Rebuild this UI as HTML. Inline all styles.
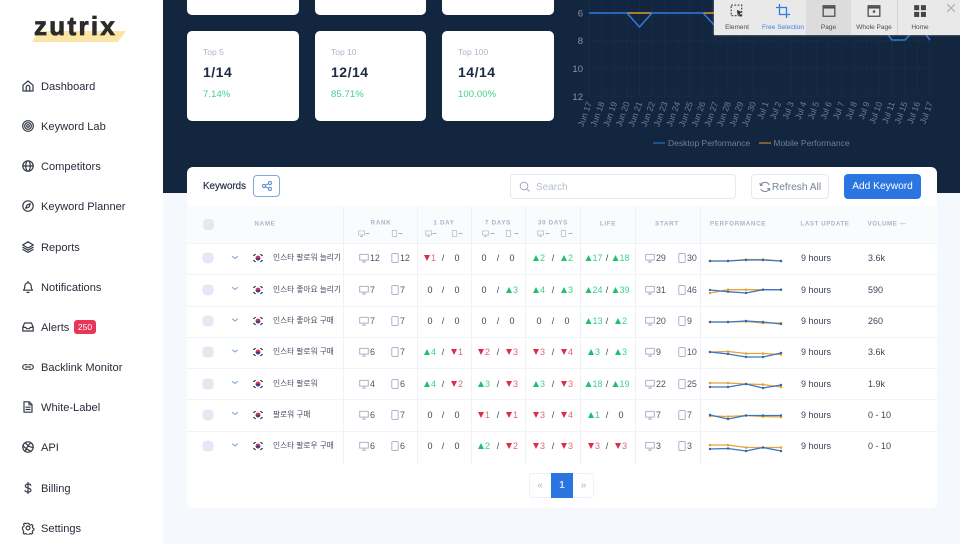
<!DOCTYPE html>
<html><head><meta charset="utf-8"><style>
*{box-sizing:border-box;margin:0;padding:0}
html,body{width:960px;height:544px;overflow:hidden;background:#f5f8fc;font-family:"Liberation Sans","Noto Sans CJK KR",sans-serif;position:relative}
.abs,.n,.n svg,.c,.r span,.r svg,.r i{position:absolute}
#side{position:absolute;left:0;top:0;width:163px;height:544px;background:#fff}
.n{left:41px;margin-top:1px;font-size:11.1px;line-height:14px;color:#262d3a;transform:translateY(-50%);white-space:nowrap}
.n svg{left:-20px;top:-1px;width:14px;height:14px;fill:none;stroke:#333a46;stroke-width:1.2;stroke-linecap:round;stroke-linejoin:round}
#hero{position:absolute;left:163px;top:0;width:797px;height:193px;background:#13263f}
.c{background:#fff;border-radius:5px;width:112px;height:90px;top:31px}
.c u{position:absolute;left:16px;text-decoration:none}
.c .a{top:16px;font-size:8.5px;color:#aab6ca}
.c .b{top:33px;font-size:14px;font-weight:bold;color:#1d2a42;letter-spacing:.5px}
.c .d{top:58px;font-size:9.5px;color:#3ed28c;letter-spacing:.1px}
#card{position:absolute;left:187px;top:167px;width:750px;height:341px;background:#fff;border-radius:6px}
#head{position:absolute;left:187px;top:206px;width:750px;height:37px;background:#f9fbfd}
.h{position:absolute;font-size:6.2px;font-weight:bold;letter-spacing:.7px;color:#a9b5c8;transform:translate(-50%,-50%);white-space:nowrap}
.ln{position:absolute;left:187px;width:750px;height:1px;background:#f0f3f8}
.vl{position:absolute;top:206px;height:258px;width:1px;background:#eef1f7}
.r{position:absolute;left:0;top:0;height:0;width:960px;font-size:9px;color:#3a4558}
.r span{transform:translate(-50%,-50%);white-space:nowrap;line-height:12px}
.r .k{left:208px;top:0;width:11px;height:11px;border-radius:4px;background:#e2e9f3;transform:translate(-50%,-50%)}
.r .t{left:273px;font-size:7.7px;transform:translateY(-50%);color:#434e60}
.r .l{transform:translateY(-50%)}
.g{color:#3fd08c;font-size:9px}.e{color:#e2677c;font-size:9px}
.g:before,.e:before{content:"";display:inline-block;width:0;height:0;border-left:3.5px solid transparent;border-right:3.5px solid transparent;margin-right:1px;vertical-align:0}
.g:before{border-bottom:6px solid #1fbf74}
.e:before{border-top:6px solid #dd2d4a}
.r .s{color:#4c566a;font-size:8.9px}
.ic{fill:none;stroke:#aab6ca;stroke-width:.9;stroke-linejoin:round;stroke-linecap:round}
.btn{position:absolute;top:174px;height:25px;border-radius:4px;font-size:10.2px;line-height:25px;text-align:center}
.tb{position:absolute;top:0;height:35px;font-size:6.5px;color:#4d4d4d;text-align:center;padding-top:23.5px;white-space:nowrap}
.tb svg{position:absolute;top:4px;left:50%;margin-left:-7px;width:14px;height:14px;fill:none;stroke:#4d4d4d;stroke-width:1.1}
</style></head><body>
<svg width="0" height="0" style="position:absolute"><defs>
<symbol id="mon" viewBox="0 0 9 9"><path d="M.6 1.2h7.8v5.2H.6zM3 8.2h3M4.5 6.4v1.8"/></symbol>
<symbol id="ph" viewBox="0 0 9 9"><rect x="1.6" y=".5" width="5.8" height="8" rx="1"/></symbol>
<symbol id="fl" viewBox="0 0 10 10"><circle cx="5" cy="5" r="2.4" fill="#d4314b"/><path d="M2.6 5a2.4 2.4 0 0 0 4.8 0z" fill="#2b4a8e"/><path d="M.8 2.6l1.4-1.2M.8 7.4l1.4 1.2M9.2 2.6L7.8 1.4M9.2 7.4L7.8 8.6" stroke="#222" stroke-width="1.1" fill="none"/></symbol>
<marker id="mb" markerWidth="3" markerHeight="3" refX="1.5" refY="1.5" markerUnits="userSpaceOnUse"><circle cx="1.5" cy="1.5" r="1.2" fill="#33659f"/></marker>
<marker id="mo" markerWidth="3" markerHeight="3" refX="1.5" refY="1.5" markerUnits="userSpaceOnUse"><circle cx="1.5" cy="1.5" r="1.3" fill="#e8a23a"/></marker>
</defs></svg>

<div id="side">
<svg class="abs" style="left:30px;top:29px" width="98" height="14"><path d="M9 2H96L88 13H2z" fill="#fbe5a6"/></svg>
<div class="abs" style="left:34px;top:11px;font-size:26px;line-height:30px;font-weight:bold;color:#2c2b29;letter-spacing:2.3px;-webkit-text-stroke:.8px #2c2b29">zutrix</div>

<div class="n" style="top:86px"><svg viewBox="0 0 14 14"><path d="M2 6.2 7 2l5 4.2V12H2zM5.2 12V8.2a1.800 1.800 0 0 1 3.600 0V12"/></svg>Dashboard</div>
<div class="n" style="top:126px"><svg viewBox="0 0 14 14"><circle cx="7" cy="7" r="5.300"/><circle cx="7" cy="7" r="3.300"/><circle cx="7" cy="7" r="1.300"/></svg>Keyword Lab</div>
<div class="n" style="top:166px"><svg viewBox="0 0 14 14"><circle cx="7" cy="7" r="5.200"/><ellipse cx="7" cy="7" rx="2.300" ry="5.200"/><path d="M1.800 7h10.400"/></svg>Competitors</div>
<div class="n" style="top:206px"><svg viewBox="0 0 14 14"><circle cx="7" cy="7" r="5.200"/><path d="M9.300 4.700 8 8 4.700 9.300 6 6z"/></svg>Keyword Planner</div>
<div class="n" style="top:247px"><svg viewBox="0 0 14 14"><path d="M7 1.800 12.300 5 7 8 1.700 5zM1.900 7.300 7 10.200l5.100-2.900M1.900 9.600 7 12.400l5.100-2.800"/></svg>Reports</div>
<div class="n" style="top:287px"><svg viewBox="0 0 14 14"><path d="M2.500 10.200c1-1 1.300-1.800 1.300-4.200a3.200 3.200 0 0 1 6.400 0c0 2.400.3 3.200 1.300 4.200zM6 12.400h2M7 1.500v1.200"/></svg>Notifications</div>
<div class="n" style="top:327px"><svg viewBox="0 0 14 14"><path d="M1.800 7 3.600 3h6.800l1.800 4v4H1.800zM1.800 7.400h3l.8 1.300h2.800l.8-1.300h3"/></svg>Alerts</div>
<div class="abs" style="left:74px;top:320px;width:22px;height:14px;background:#e8365a;border-radius:3px;color:#fff;font-size:8.5px;line-height:14px;text-align:center">250</div>
<div class="n" style="top:367px"><svg viewBox="0 0 14 14"><path d="M6 4.700H4a2.300 2.300 0 0 0 0 4.600h2M8 4.700h2a2.300 2.300 0 0 1 0 4.600H8M4.800 7h4.400"/></svg>Backlink Monitor</div>
<div class="n" style="top:407px"><svg viewBox="0 0 14 14"><path d="M3 1.800h5.300L11 4.500v7.700H3zM8 2v2.800h3M5 7.200h4M5 9.500h4"/></svg>White-Label</div>
<div class="n" style="top:447px"><svg viewBox="0 0 14 14"><circle cx="7" cy="7" r="5.200"/><path d="M4.200 2.600C6 5 9 7 11.900 7.600M9.800 2.600C8 5 5 8 4.200 11.400M2 5.600c2 2.600 5.600 4.500 7.800 5.800"/></svg>API</div>
<div class="n" style="top:488px"><svg viewBox="0 0 14 14"><path d="M7 1.500v11M9.800 4.200C9.300 3.300 8.300 3 7 3 5.400 3 4.300 3.800 4.300 5S5.400 6.600 7 7s2.900 1 2.900 2.200S8.700 11 7 11c-1.400 0-2.500-.4-3-1.300"/></svg>Billing</div>
<div class="n" style="top:528px"><svg viewBox="0 0 14 14"><circle cx="7" cy="7" r="1.900"/><path d="M6 1.700h2l.4 1.500 1.400.6 1.300-.8 1.400 1.400-.8 1.300.6 1.400 1.300.4v1.900l-1.400.4-.6 1.400.8 1.300-1.400 1.300-1.300-.7-1.400.6-.4 1.400H6l-.4-1.500-1.400-.6-1.300.8-1.400-1.400.8-1.300-.6-1.400L.8 8V6l1.400-.4.600-1.400L2 2.900l1.400-1.400 1.300.8 1.400-.6z" transform="translate(.7 .7) scale(.9)"/></svg>Settings</div>
</div>

<div id="hero"></div>
<div class="c" style="left:187px;top:-75px"></div>
<div class="c" style="left:315px;top:-75px;width:111px"></div>
<div class="c" style="left:442px;top:-75px"></div>
<div class="c" style="left:187px"><u class="a">Top 5</u><u class="b">1/14</u><u class="d">7.14%</u></div>
<div class="c" style="left:315px;width:111px"><u class="a">Top 10</u><u class="b">12/14</u><u class="d">85.71%</u></div>
<div class="c" style="left:442px"><u class="a">Top 100</u><u class="b">14/14</u><u class="d">100.00%</u></div>

<svg class="abs" style="left:560px;top:0" width="400" height="165" font-family="Liberation Sans" >
<g stroke="#22364f" stroke-width="1" stroke-dasharray="1 2">
<path d="M29 13H370M29 41H370M29 68H370M29 96H370"/></g>
<g stroke="#182b45" stroke-width="1">
<path d="M29 0V96M41.600 0V96M54.300 0V96M66.900 0V96M79.500 0V96M92.100 0V96M104.800 0V96M117.400 0V96M130 0V96M142.600 0V96M155.300 0V96M167.900 0V96M180.500 0V96M193.100 0V96M205.800 0V96M218.400 0V96M231 0V96M243.600 0V96M256.300 0V96M268.900 0V96M281.500 0V96M294.100 0V96M306.800 0V96M319.400 0V96M332 0V96M344.600 0V96M357.300 0V96M370 0V96"/></g>
<g fill="#8494aa" font-size="9.500" text-anchor="end"><text x="23" y="16.500">6</text><text x="23" y="44">8</text><text x="23" y="72">10</text><text x="23" y="100">12</text></g>
<path d="M67 13H92M143 13H170" stroke="#e0982e" stroke-width="1.500" fill="none"/>
<path d="M29 13H67L79.500 27 92 13H143L156 27 170 27M322 27 332 40H345L357 27M360 27 370 40" stroke="#2c7be0" stroke-width="1.500" fill="none"/>
<g fill="#6d7f98" font-size="8.600" text-anchor="end">
<text transform="translate(32 103) rotate(-70)">Jun 17</text><text transform="translate(44.600 103) rotate(-70)">Jun 18</text><text transform="translate(57.300 103) rotate(-70)">Jun 19</text><text transform="translate(69.900 103) rotate(-70)">Jun 20</text><text transform="translate(82.500 103) rotate(-70)">Jun 21</text><text transform="translate(95.100 103) rotate(-70)">Jun 22</text><text transform="translate(107.800 103) rotate(-70)">Jun 23</text><text transform="translate(120.400 103) rotate(-70)">Jun 24</text><text transform="translate(133 103) rotate(-70)">Jun 25</text><text transform="translate(145.600 103) rotate(-70)">Jun 26</text><text transform="translate(158.300 103) rotate(-70)">Jun 27</text><text transform="translate(170.900 103) rotate(-70)">Jun 28</text><text transform="translate(183.500 103) rotate(-70)">Jun 29</text><text transform="translate(196.100 103) rotate(-70)">Jun 30</text><text transform="translate(208.800 103) rotate(-70)">Jul 1</text><text transform="translate(221.400 103) rotate(-70)">Jul 2</text><text transform="translate(234 103) rotate(-70)">Jul 3</text><text transform="translate(246.600 103) rotate(-70)">Jul 4</text><text transform="translate(259.300 103) rotate(-70)">Jul 5</text><text transform="translate(271.900 103) rotate(-70)">Jul 6</text><text transform="translate(284.500 103) rotate(-70)">Jul 7</text><text transform="translate(297.100 103) rotate(-70)">Jul 8</text><text transform="translate(309.800 103) rotate(-70)">Jul 9</text><text transform="translate(322.400 103) rotate(-70)">Jul 10</text><text transform="translate(335 103) rotate(-70)">Jul 11</text><text transform="translate(347.600 103) rotate(-70)">Jul 15</text><text transform="translate(360.300 103) rotate(-70)">Jul 16</text><text transform="translate(373 103) rotate(-70)">Jul 17</text>
</g>
<path d="M93 143h12" stroke="#2c7be0" stroke-width="1"/><path d="M199 143h12" stroke="#e0982e" stroke-width="1"/>
<g fill="#6d7f98" font-size="8.500"><text x="108" y="146">Desktop Performance</text><text x="213.500" y="146">Mobile Performance</text></g>
</svg>

<div class="abs" style="left:714px;top:0;width:246px;height:35px;background:#e9e9e9;box-shadow:0 0 2px #999"></div>
<div class="abs" style="left:806px;top:0;width:45px;height:35px;background:#dcdcdc"></div>
<div class="abs" style="left:897px;top:0;width:1px;height:35px;background:#d2d2d2"></div>
<div class="tb" style="left:714px;width:46px"><svg viewBox="0 0 12 12"><path d="M1 1h9v9H1z" stroke-dasharray="1.500 1.300"/><path d="M6 5l4.500 2-2 .7L10 10.500 9 11 7.600 8.600 6.500 10z" fill="#333" stroke="none"/></svg>Element</div>
<div class="tb" style="left:760px;width:46px;color:#3f84e8"><svg viewBox="0 0 12 12" style="stroke:#2f7be6"><path d="M3 0v9h9M0 3h9v9"/></svg>Free Selection</div>
<div class="tb" style="left:806px;width:45px"><svg viewBox="0 0 12 12"><path d="M1 1.500h10v9H1z"/><path d="M1 3h10" stroke-width="1.800"/></svg>Page</div>
<div class="tb" style="left:851px;width:46px"><svg viewBox="0 0 12 12"><path d="M1 1.500h10v9H1z"/><path d="M1 3h10" stroke-width="1.800"/><rect x="5" y="5.500" width="2" height="2" fill="#4d4d4d" stroke="none"/></svg>Whole Page</div>
<div class="tb" style="left:897px;width:46px"><svg viewBox="0 0 12 12" style="stroke:none;fill:#444"><rect x="1" y="1" width="4.300" height="4.300"/><rect x="6.800" y="1" width="4.300" height="4.300"/><rect x="1" y="6.800" width="4.300" height="4.300"/><rect x="6.800" y="6.800" width="4.300" height="4.300"/></svg>Home</div>
<svg class="abs" style="left:946px;top:3px" width="10" height="10"><path d="M1 1l8 8M9 1l-8 8" stroke="#aaa" stroke-width="1"/></svg>

<div id="card"></div>
<div class="abs" style="left:203px;top:181px;font-size:9.8px;line-height:12px;color:#25324a;-webkit-text-stroke:.2px #25324a">Keywords</div>
<div class="abs" style="left:253px;top:175px;width:27px;height:22px;border:1px solid #7fa8da;border-radius:4px"><svg class="abs" style="left:7px;top:4px" width="12" height="12" fill="none" stroke="#4f86cc" stroke-width=".9"><circle cx="3" cy="6" r="1.500"/><circle cx="9" cy="3" r="1.500"/><circle cx="9" cy="9" r="1.500"/><path d="M4.400 5.300 7.600 3.700M4.400 6.700l3.200 1.600"/></svg></div>
<div class="btn" style="left:510px;width:226px;border:1px solid #e4e9f1;text-align:left;padding-left:25px;color:#b4bfd0;font-size:10px">Search<svg class="abs" style="left:8px;top:6px" width="12" height="12" fill="none" stroke="#9aa7ba" stroke-width="1"><circle cx="5" cy="5" r="3.800"/><path d="M8 8l2.500 2.500"/></svg></div>
<div class="btn" style="left:751px;width:78px;border:1px solid #e4e9f1;color:#76849a;padding-left:13px">Refresh All<svg class="abs" style="left:7px;top:6px" width="12" height="12" fill="none" stroke="#76849a" stroke-width="1"><path d="M1.500 4.500A4.800 4.800 0 0 1 10.300 4M10.500 7.500A4.800 4.800 0 0 1 1.800 8M.8 2l.7 2.500L4 4M11 10l-.5-2.500L8 8"/></svg></div>
<div class="btn" style="left:844px;width:77px;background:#2a75e0;color:#fff">Add Keyword</div>

<div id="head"></div>
<div class="ln" style="top:243px"></div><div class="ln" style="top:274px"></div><div class="ln" style="top:306px"></div><div class="ln" style="top:337px"></div><div class="ln" style="top:368px"></div><div class="ln" style="top:399px"></div><div class="ln" style="top:431px"></div>
<div class="vl" style="left:343px"></div><div class="vl" style="left:417px"></div><div class="vl" style="left:471px"></div><div class="vl" style="left:525px"></div><div class="vl" style="left:580px"></div><div class="vl" style="left:635px"></div><div class="vl" style="left:700px"></div>

<div class="abs" style="left:203px;top:219px;width:11px;height:11px;border-radius:4px;background:#e2e9f3"></div>
<div class="h" style="left:265px;top:224px">NAME</div>
<div class="h" style="left:381px;top:223px">RANK</div>
<div class="h" style="left:444px;top:223px">1 DAY</div>
<div class="h" style="left:498px;top:223px">7 DAYS</div>
<div class="h" style="left:553px;top:223px">30 DAYS</div>
<div class="h" style="left:608px;top:224px">LIFE</div>
<div class="h" style="left:667px;top:224px">START</div>
<div class="h" style="left:738px;top:224px">PERFORMANCE</div>
<div class="h" style="left:825px;top:224px;letter-spacing:.55px">LAST UPDATE</div>
<div class="h" style="left:887px;top:224px;letter-spacing:.55px">VOLUME —</div>

<svg class="abs ic" style="left:0;top:0" width="960" height="544">
<use href="#mon" x="358" y="230" width="7" height="7"/><use href="#ph" x="391" y="230" width="7" height="7"/>
<use href="#mon" x="425" y="230" width="7" height="7"/><use href="#ph" x="451" y="230" width="7" height="7"/>
<use href="#mon" x="482" y="230" width="7" height="7"/><use href="#ph" x="505" y="230" width="7" height="7"/>
<use href="#mon" x="537" y="230" width="7" height="7"/><use href="#ph" x="560" y="230" width="7" height="7"/>
<path d="M366 233.500h3M399 233.500h3M433 233.500h3M459 233.500h3M491 233.500h3M515 233.500h3M546 233.500h3M569 233.500h3" stroke="#a3afc2"/>
<path d="M232.500 256.500l2.500 2 2.500-2M232.500 287.500l2.500 2 2.500-2M232.500 319l2.500 2 2.500-2M232.500 350l2.500 2 2.500-2M232.500 381.500l2.500 2 2.500-2M232.500 412.500l2.500 2 2.500-2M232.500 444l2.500 2 2.500-2" stroke="#6f9fd8" stroke-width="1"/>
<g stroke="#a9b5c9" stroke-width=".9">
<use href="#mon" x="359" y="253" width="10" height="10"/><use href="#ph" x="390" y="253" width="10" height="10"/><use href="#mon" x="645" y="253" width="10" height="10"/><use href="#ph" x="677" y="253" width="10" height="10"/>
<use href="#mon" x="359" y="285" width="10" height="10"/><use href="#ph" x="390" y="285" width="10" height="10"/><use href="#mon" x="645" y="285" width="10" height="10"/><use href="#ph" x="677" y="285" width="10" height="10"/>
<use href="#mon" x="359" y="316" width="10" height="10"/><use href="#ph" x="390" y="316" width="10" height="10"/><use href="#mon" x="645" y="316" width="10" height="10"/><use href="#ph" x="677" y="316" width="10" height="10"/>
<use href="#mon" x="359" y="347" width="10" height="10"/><use href="#ph" x="390" y="347" width="10" height="10"/><use href="#mon" x="645" y="347" width="10" height="10"/><use href="#ph" x="677" y="347" width="10" height="10"/>
<use href="#mon" x="359" y="379" width="10" height="10"/><use href="#ph" x="390" y="379" width="10" height="10"/><use href="#mon" x="645" y="379" width="10" height="10"/><use href="#ph" x="677" y="379" width="10" height="10"/>
<use href="#mon" x="359" y="410" width="10" height="10"/><use href="#ph" x="390" y="410" width="10" height="10"/><use href="#mon" x="645" y="410" width="10" height="10"/><use href="#ph" x="677" y="410" width="10" height="10"/>
<use href="#mon" x="359" y="441" width="10" height="10"/><use href="#ph" x="390" y="441" width="10" height="10"/><use href="#mon" x="645" y="441" width="10" height="10"/><use href="#ph" x="677" y="441" width="10" height="10"/>
</g>
<g stroke="none">
<use href="#fl" x="253" y="253" width="10" height="10"/><use href="#fl" x="253" y="285" width="10" height="10"/><use href="#fl" x="253" y="316" width="10" height="10"/><use href="#fl" x="253" y="347" width="10" height="10"/><use href="#fl" x="253" y="379" width="10" height="10"/><use href="#fl" x="253" y="410" width="10" height="10"/><use href="#fl" x="253" y="441" width="10" height="10"/>
</g>
<g fill="none" stroke="#e8a23a" stroke-width="1.300" style="marker:url(#mo)">
<polyline points="710,261 728,261 746,259.500 763,259.500 781,261"/>
<polyline points="710,293 728,289.700 746,289.700 763,289.700 781,289.700"/>
<polyline points="710,322 728,322 746,321.500 763,323 781,323"/>
<polyline points="710,352 728,351.500 746,353.500 763,353.500 781,354.500"/>
<polyline points="710,383 728,383 746,384 763,384.500 781,387"/>
<polyline points="710,416 728,416.500 746,415.500 763,416.500 781,417"/>
<polyline points="710,445 728,445 746,447.500 763,447.500 781,447.500"/>
</g>
<g fill="none" stroke="#3a76c4" stroke-width="1.300" style="marker:url(#mb)">
<polyline points="710,261 728,261 746,260 763,260 781,261"/>
<polyline points="710,290 728,291.700 746,293 763,289.700 781,289.700"/>
<polyline points="710,322 728,322 746,321 763,322 781,324"/>
<polyline points="710,352 728,354 746,357 763,357 781,353"/>
<polyline points="710,387 728,387 746,384 763,388 781,385"/>
<polyline points="710,415 728,419 746,415.500 763,415.500 781,415.500"/>
<polyline points="710,449 728,448.500 746,451 763,447.500 781,451"/>
</g>
</svg>

<div class="r" style="top:258px"><i class="k"></i><span class="t">인스타 팔로워 늘리기</span><span class="l s" style="left:370px">12</span><span class="l s" style="left:400px">12</span><span class="e" style="left:430px">1</span><span style="left:443px">/</span><span style="left:457px">0</span><span style="left:484px">0</span><span style="left:498px">/</span><span style="left:512px">0</span><span class="g" style="left:539px">2</span><span style="left:553px">/</span><span class="g" style="left:567px">2</span><span class="g" style="left:594px">17</span><span style="left:607px">/</span><span class="g" style="left:621px">18</span><span class="l s" style="left:656px">29</span><span class="l s" style="left:687px">30</span><span class="l" style="left:801px">9 hours</span><span class="l" style="left:868px">3.6k</span></div>
<div class="r" style="top:290px"><i class="k"></i><span class="t">인스타 좋아요 늘리기</span><span class="l s" style="left:370px">7</span><span class="l s" style="left:400px">7</span><span style="left:430px">0</span><span style="left:443px">/</span><span style="left:457px">0</span><span style="left:484px">0</span><span style="left:498px">/</span><span class="g" style="left:512px">3</span><span class="g" style="left:539px">4</span><span style="left:553px">/</span><span class="g" style="left:567px">3</span><span class="g" style="left:594px">24</span><span style="left:607px">/</span><span class="g" style="left:621px">39</span><span class="l s" style="left:656px">31</span><span class="l s" style="left:687px">46</span><span class="l" style="left:801px">9 hours</span><span class="l" style="left:868px">590</span></div>
<div class="r" style="top:321px"><i class="k"></i><span class="t">인스타 좋아요 구매</span><span class="l s" style="left:370px">7</span><span class="l s" style="left:400px">7</span><span style="left:430px">0</span><span style="left:443px">/</span><span style="left:457px">0</span><span style="left:484px">0</span><span style="left:498px">/</span><span style="left:512px">0</span><span style="left:539px">0</span><span style="left:553px">/</span><span style="left:567px">0</span><span class="g" style="left:594px">13</span><span style="left:607px">/</span><span class="g" style="left:621px">2</span><span class="l s" style="left:656px">20</span><span class="l s" style="left:687px">9</span><span class="l" style="left:801px">9 hours</span><span class="l" style="left:868px">260</span></div>
<div class="r" style="top:352px"><i class="k"></i><span class="t">인스타 팔로워 구매</span><span class="l s" style="left:370px">6</span><span class="l s" style="left:400px">7</span><span class="g" style="left:430px">4</span><span style="left:443px">/</span><span class="e" style="left:457px">1</span><span class="e" style="left:484px">2</span><span style="left:498px">/</span><span class="e" style="left:512px">3</span><span class="e" style="left:539px">3</span><span style="left:553px">/</span><span class="e" style="left:567px">4</span><span class="g" style="left:594px">3</span><span style="left:607px">/</span><span class="g" style="left:621px">3</span><span class="l s" style="left:656px">9</span><span class="l s" style="left:687px">10</span><span class="l" style="left:801px">9 hours</span><span class="l" style="left:868px">3.6k</span></div>
<div class="r" style="top:384px"><i class="k"></i><span class="t">인스타 팔로워</span><span class="l s" style="left:370px">4</span><span class="l s" style="left:400px">6</span><span class="g" style="left:430px">4</span><span style="left:443px">/</span><span class="e" style="left:457px">2</span><span class="g" style="left:484px">3</span><span style="left:498px">/</span><span class="e" style="left:512px">3</span><span class="g" style="left:539px">3</span><span style="left:553px">/</span><span class="e" style="left:567px">3</span><span class="g" style="left:594px">18</span><span style="left:607px">/</span><span class="g" style="left:621px">19</span><span class="l s" style="left:656px">22</span><span class="l s" style="left:687px">25</span><span class="l" style="left:801px">9 hours</span><span class="l" style="left:868px">1.9k</span></div>
<div class="r" style="top:415px"><i class="k"></i><span class="t">팔로워 구매</span><span class="l s" style="left:370px">6</span><span class="l s" style="left:400px">7</span><span style="left:430px">0</span><span style="left:443px">/</span><span style="left:457px">0</span><span class="e" style="left:484px">1</span><span style="left:498px">/</span><span class="e" style="left:512px">1</span><span class="e" style="left:539px">3</span><span style="left:553px">/</span><span class="e" style="left:567px">4</span><span class="g" style="left:594px">1</span><span style="left:607px">/</span><span style="left:621px">0</span><span class="l s" style="left:656px">7</span><span class="l s" style="left:687px">7</span><span class="l" style="left:801px">9 hours</span><span class="l" style="left:868px">0 - 10</span></div>
<div class="r" style="top:446px"><i class="k"></i><span class="t">인스타 팔로우 구매</span><span class="l s" style="left:370px">6</span><span class="l s" style="left:400px">6</span><span style="left:430px">0</span><span style="left:443px">/</span><span style="left:457px">0</span><span class="g" style="left:484px">2</span><span style="left:498px">/</span><span class="e" style="left:512px">2</span><span class="e" style="left:539px">3</span><span style="left:553px">/</span><span class="e" style="left:567px">3</span><span class="e" style="left:594px">3</span><span style="left:607px">/</span><span class="e" style="left:621px">3</span><span class="l s" style="left:656px">3</span><span class="l s" style="left:687px">3</span><span class="l" style="left:801px">9 hours</span><span class="l" style="left:868px">0 - 10</span></div>

<div class="abs" style="left:529px;top:473px;width:65px;height:25px;border:1px solid #eef1f6;border-radius:4px;background:#fff"></div>
<div class="abs" style="left:551px;top:473px;width:22px;height:25px;background:#2a75e0;color:#cfe2fb;font-size:10px;font-weight:bold;line-height:25px;text-align:center">1</div>
<div class="abs" style="left:529px;top:473px;width:22px;height:25px;color:#a9b5c9;font-size:10px;line-height:25px;text-align:center">«</div>
<div class="abs" style="left:573px;top:473px;width:21px;height:25px;color:#a9b5c9;font-size:10px;line-height:25px;text-align:center">»</div>
</body></html>
